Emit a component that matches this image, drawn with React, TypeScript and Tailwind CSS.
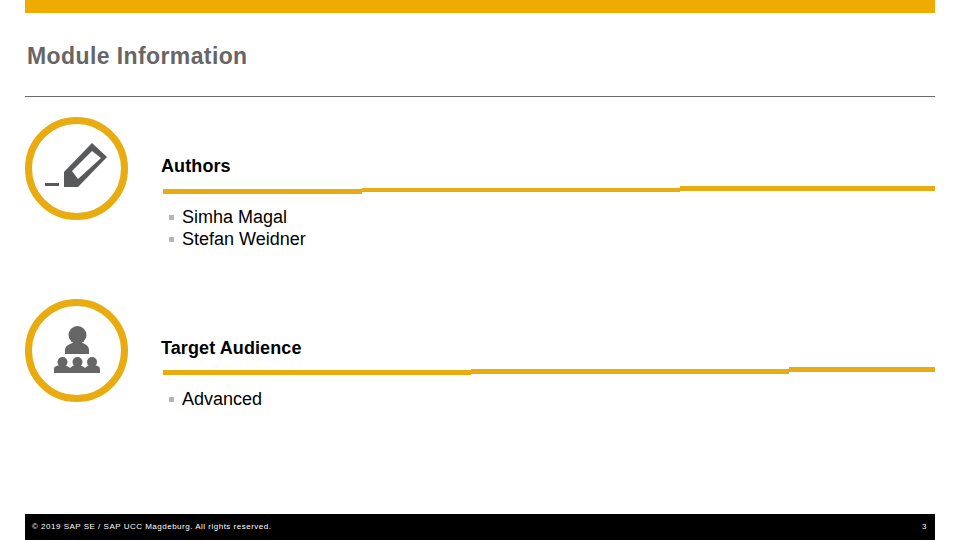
const PencilIcon = () => (
  <svg width="62" height="44" viewBox="0 0 62 44" className="shrink-0 mt-[-7px] ml-[-1px]">
    <rect x="0" y="40" width="14" height="3" fill="#58595b" />
    <path d="M19 44 V29 L47 0 L62 14 L33 44 Z" fill="#58595b" />
    <path d="M27 28 L47 8 L56 15 L33 36 Z" fill="#ffffff" />
  </svg>
);

const AudienceIcon = () => (
  <svg width="46" height="47" viewBox="0 0 46 47" fill="#666666" className="shrink-0 mt-[-3px]">
    <circle cx="23.5" cy="9" r="9" />
    <path d="M11 28 V24 C11 19 17 18 20 16 H27 C30 18 35 19 35 24 V28 Z" />
    <circle cx="8.5" cy="36" r="5" />
    <circle cx="23.5" cy="36" r="5" />
    <circle cx="38" cy="36" r="5" />
    <path d="M0 47 V43 C0 40 4 39 8 39 C11 39 14 40 16 42 C18 40 20 39 23 39 C26 39 29 40 31 42 C33 40 35 39 38 39 C42 39 46 40 46 43 V47 Z" />
  </svg>
);

const Section = ({ title, items, icon, segs }: { title: string; items: string[]; icon: React.ReactNode; segs: string[] }) => (
  <div className="flex">
    <div className="w-[103px] h-[103px] shrink-0 rounded-full border-[7px] border-[#e8ab10] flex items-center justify-center">
      {icon}
    </div>
    <div className="ml-[33px] flex-1 pt-[39px]">
      <h2 className="text-[18px] leading-[21px] font-bold text-black tracking-[0.1px]">{title}</h2>
      <div className="mt-[9px] ml-[2px] h-[6px] flex">
        {segs.map((s) => (
          <div key={s} className={s} />
        ))}
      </div>
      <ul className="mt-[14px] ml-[8px]">
        {items.map((item) => (
          <li key={item} className="flex items-center h-[22px] text-[18px] text-black">
            <span className="w-[5px] h-[5px] bg-[#b5b5b5] mr-[8px] mt-[1px]" />
            {item}
          </li>
        ))}
      </ul>
    </div>
  </div>
);

export default function App() {
  return (
    <div className="w-[960px] h-[540px] bg-white px-[25px] flex flex-col font-['Liberation_Sans',Arial,sans-serif] overflow-hidden">
      <div className="h-[13px] bg-[#f0ab00] shrink-0" />
      <h1 className="mt-[30px] ml-[2px] text-[23px] leading-[27px] font-bold text-[#666666] tracking-[0.4px]">Module Information</h1>
      <div className="mt-[26px] h-px bg-[#6b6b6b] shrink-0" />
      <div className="mt-[20px]">
        <Section
          title="Authors"
          icon={<PencilIcon />}
          items={["Simha Magal", "Stefan Weidner"]}
          segs={[
            "w-[199px] h-[5px] mt-[3px] bg-[#e8ab10]",
            "w-[318px] h-[4px] mt-[2px] bg-[#e8ab10]",
            "w-[255px] h-[5px] bg-[#e8ab10]",
          ]}
        />
      </div>
      <div className="mt-[49px] flex-1">
        <Section
          title="Target Audience"
          icon={<AudienceIcon />}
          items={["Advanced"]}
          segs={[
            "w-[308px] h-[5px] mt-[2px] bg-[#e8ab10]",
            "w-[318px] h-[5px] mt-[1px] bg-[#e8ab10]",
            "w-[146px] h-[5px] mt-[-1px] bg-[#e8ab10]",
          ]}
        />
      </div>
      <footer className="h-[26px] bg-black shrink-0 flex items-center justify-between pl-[7px] pr-[8px] text-white text-[8px] tracking-[0.5px]">
        <span>© 2019 SAP SE / SAP UCC Magdeburg. All rights reserved.</span>
        <span>3</span>
      </footer>
    </div>
  );
}
